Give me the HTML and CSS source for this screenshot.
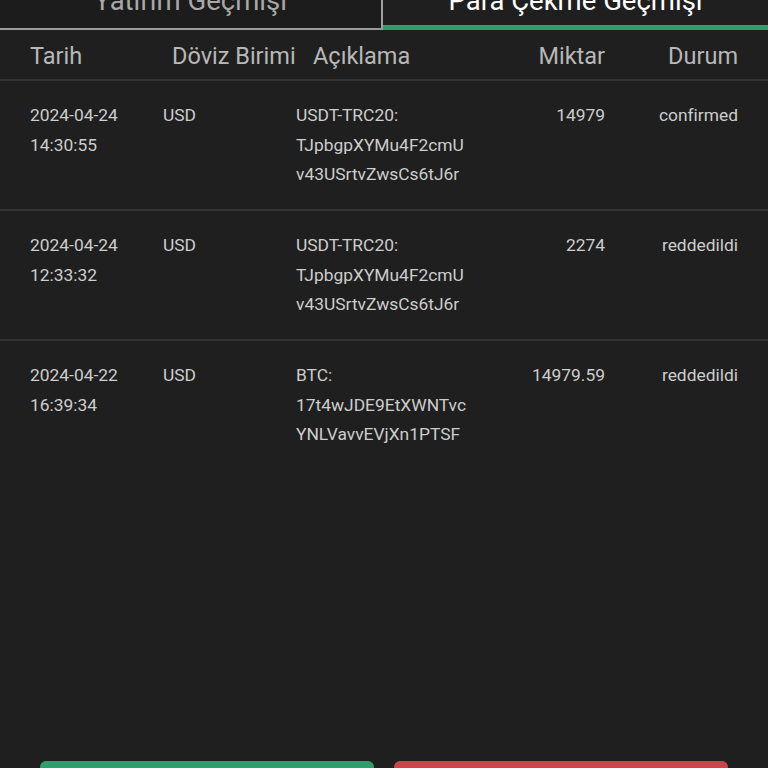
FILE: index.html
```
<!DOCTYPE html>
<html lang="tr">
<head>
<meta charset="utf-8">
<link rel="stylesheet" href="styles.css">
</head>
<body>
<div class="page">
  <div class="tabs">
    <div class="tab tab-off"><span class="tab-label">Yatırım Geçmişi</span></div>
    <div class="tab tab-on"><span class="tab-label">Para Çekme Geçmişi</span></div>
  </div>
  <div class="head">
    <div class="h-date">Tarih</div>
    <div class="h-cur">Döviz Birimi</div>
    <div class="h-desc">Açıklama</div>
    <div class="h-amt">Miktar</div>
    <div class="h-stat">Durum</div>
  </div>
  <div class="rows">
    <div class="row">
      <div class="c-date">2024-04-24<br>14:30:55</div>
      <div class="c-cur">USD</div>
      <div class="c-desc">USDT-TRC20:<br>TJpbgpXYMu4F2cmU<br>v43USrtvZwsCs6tJ6r</div>
      <div class="c-amt">14979</div>
      <div class="c-stat">confirmed</div>
    </div>
    <div class="row">
      <div class="c-date">2024-04-24<br>12:33:32</div>
      <div class="c-cur">USD</div>
      <div class="c-desc">USDT-TRC20:<br>TJpbgpXYMu4F2cmU<br>v43USrtvZwsCs6tJ6r</div>
      <div class="c-amt">2274</div>
      <div class="c-stat">reddedildi</div>
    </div>
    <div class="row last">
      <div class="c-date">2024-04-22<br>16:39:34</div>
      <div class="c-cur">USD</div>
      <div class="c-desc">BTC:<br>17t4wJDE9EtXWNTvc<br>YNLVavvEVjXn1PTSF</div>
      <div class="c-amt">14979.59</div>
      <div class="c-stat">reddedildi</div>
    </div>
  </div>
  <div class="spacer"></div>
  <div class="buttons">
    <div class="btn btn-green"></div>
    <div class="btn btn-red"></div>
  </div>
</div>
</body>
</html>
```
FILE: styles.css
```
* { box-sizing: border-box; }
html, body { margin: 0; padding: 0; }
body {
  background: #1f1f1f;
  font-family: Roboto, "Noto Sans", "Liberation Sans", sans-serif;
  color: #cccccc;
  width: 768px;
  height: 768px;
  overflow: hidden;
}
.page {
  display: flex;
  flex-direction: column;
  height: 768px;
}
.tabs {
  display: flex;
  height: 30px;
  overflow: hidden;
}
.tab {
  flex: 0 0 auto;
  height: 30px;
  overflow: hidden;
  text-align: center;
  font-size: 27.5px;
  line-height: 28px;
}
.tab-label {
  display: block;
  margin-top: -13px;
}
.tab-off {
  width: 383px;
  background: #1c1c1c;
  color: #a8a8a8;
  border-right: 2px solid #a0a0a0;
  border-bottom: 2px solid #9a9a9a;
}
.tab-on {
  width: 385px;
  color: #ffffff;
  border-bottom: 5px solid #2f9e6b;
}
.head {
  display: grid;
  grid-template-columns: 142px 141px 1fr 120px 133px;
  height: 51px;
  align-items: center;
  padding: 3px 30px 0 30px;
  font-size: 23.5px;
  color: #b8b8b8;
  border-bottom: 2px solid #333333;
}
.h-amt { text-align: right; }
.h-stat { text-align: right; }
.row {
  display: grid;
  grid-template-columns: 133px 133px 1fr 120px 133px;
  padding: 20px 30px 21px 30px;
  height: 130px;
  font-size: 17.4px;
  line-height: 29.5px;
  color: #cdcdcd;
  border-bottom: 2px solid #333333;
}
.row.last { border-bottom: none; }
.c-amt, .c-stat { text-align: right; }
.spacer { flex: 1 1 auto; }
.buttons {
  display: flex;
  gap: 20px;
  padding: 0 40px;
  height: 7px;
}
.btn {
  flex: 1 1 0;
  height: 20px;
  border-radius: 6px;
}
.btn-green { background: #2e9e6c; }
.btn-red { background: #c9454c; }
```
